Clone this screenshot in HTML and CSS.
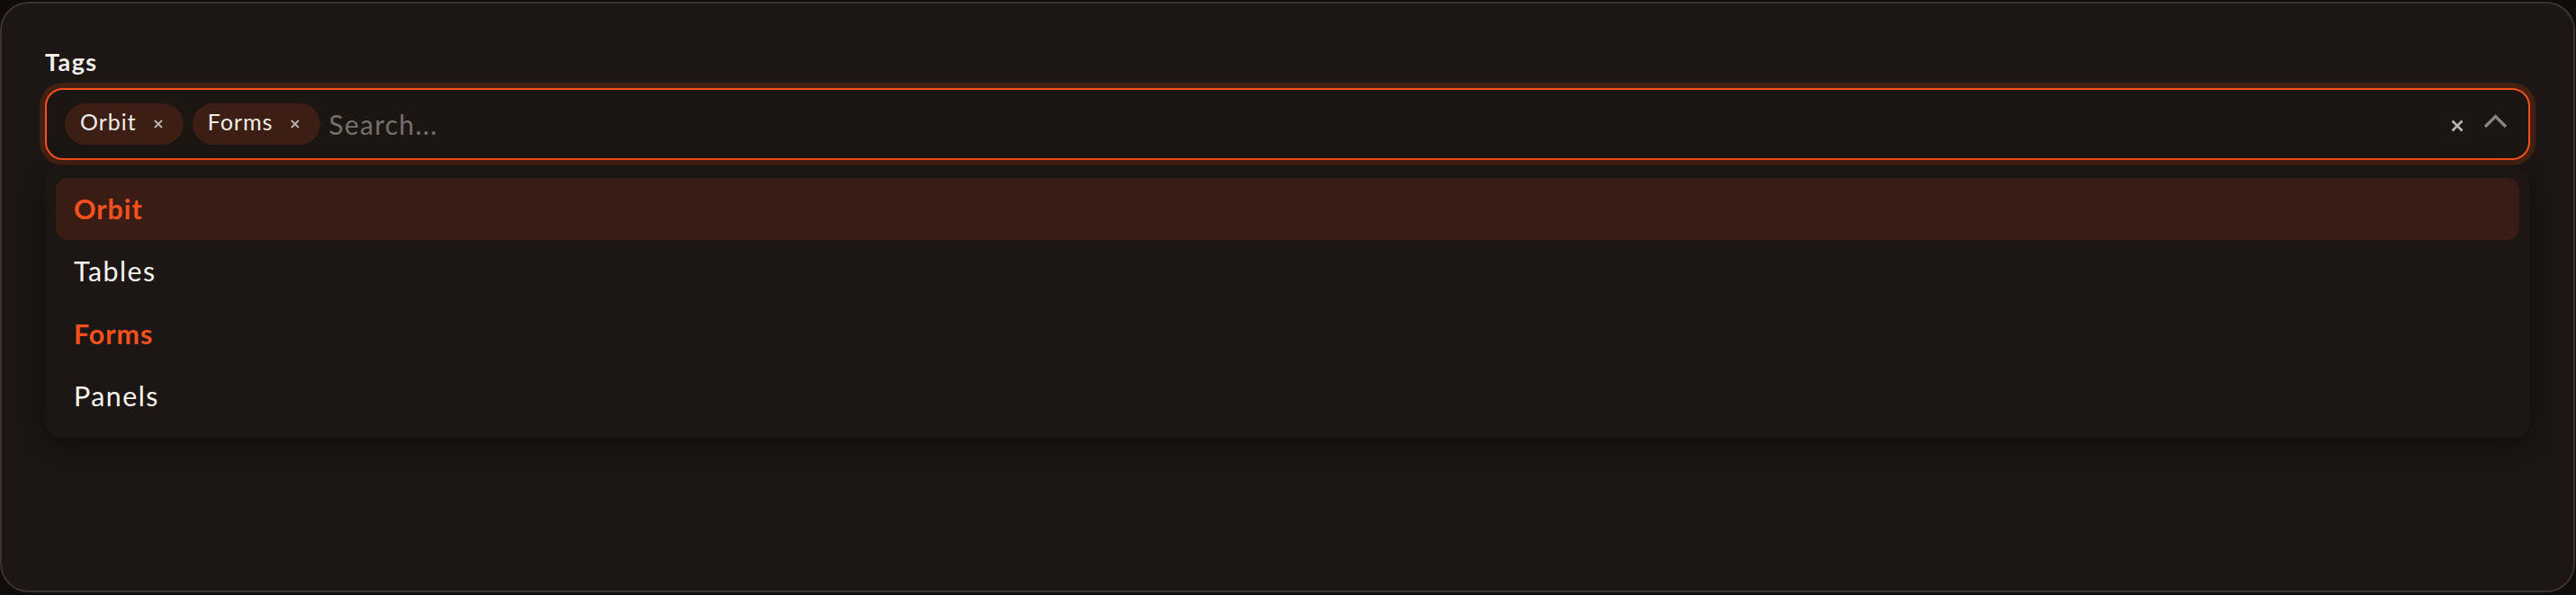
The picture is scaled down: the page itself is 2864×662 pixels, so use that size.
FILE: index.html
```html
<!DOCTYPE html>
<html lang="en">
<head>
<meta charset="utf-8">
<title>Tags</title>
<link rel="stylesheet" href="styles.css">
</head>
<body>
<div class="card">
  <div class="label">Tags</div>
  <div class="field">
    <div class="chips">
      <span class="chip"><span class="chip-text">Orbit</span><svg class="chip-x" viewBox="0 0 10 10"><path d="M1 1L9 9M9 1L1 9"/></svg></span>
      <span class="chip"><span class="chip-text">Forms</span><svg class="chip-x" viewBox="0 0 10 10"><path d="M1 1L9 9M9 1L1 9"/></svg></span>
    </div>
    <input class="search" type="text" placeholder="Search...">
    <svg class="clear" viewBox="0 0 14 14"><path d="M1.5 1.5L12.5 12.5M12.5 1.5L1.5 12.5"/></svg>
    <svg class="chevron" viewBox="0 0 27 17"><path d="M2 15L13.5 3.5L25 15"/></svg>
  </div>
  <div class="menu">
    <div class="opt opt-active opt-selected">Orbit</div>
    <div class="opt">Tables</div>
    <div class="opt opt-selected">Forms</div>
    <div class="opt">Panels</div>
  </div>
</div>
</body>
</html>
```

FILE: styles.css
```css
html, body {
  margin: 0;
  padding: 0;
  background: #100c0a;
  height: 100%;
}
body {
  font-family: "Lato", "Liberation Sans", sans-serif;
  overflow: hidden;
}
.card {
  box-sizing: border-box;
  margin-top: 2px;
  width: 2863px;
  height: 657px;
  border: 2px solid #3a322d;
  border-radius: 32px;
  background: #1c1714;
  padding: 47px 48px 0 48px;
}
.label {
  font-size: 27px;
  line-height: 36px;
  font-weight: 700;
  letter-spacing: 1.4px;
  color: #f4efea;
  margin-bottom: 11px;
}
.field {
  box-sizing: border-box;
  height: 80px;
  border: 2px solid #f4511e;
  border-radius: 20px;
  box-shadow: 0 0 0 6px #43200f;
  background: #1b1612;
  display: flex;
  align-items: center;
  padding: 0 23px 0 20px;
}
.chips {
  display: flex;
  gap: 10px;
}
.chip {
  box-sizing: border-box;
  height: 46px;
  border-radius: 23px;
  background: #3c1e15;
  display: flex;
  align-items: center;
  padding: 0 23px 5px 17px;
  color: #f0ebe6;
  font-size: 25px;
  letter-spacing: 1px;
}
.chip-text {
  line-height: 1;
}
.chip-x {
  width: 10px;
  height: 10px;
  margin-left: 19px;
  margin-top: 5px;
  fill: none;
  stroke: #b8b0aa;
  stroke-width: 2;
}
.search {
  flex: 1;
  min-width: 0;
  margin-left: 10px;
  border: none;
  outline: none;
  background: transparent;
  padding: 0;
  font-family: inherit;
  font-size: 30px;
  letter-spacing: 1.3px;
  line-height: 36px;
  height: 36px;
  color: #f4efea;
}
.search::placeholder {
  color: #76706b;
}
.clear {
  width: 14px;
  height: 14px;
  margin-top: 4px;
  fill: none;
  stroke: #bdb7b2;
  stroke-width: 2.6;
}
.chevron {
  width: 27px;
  height: 17px;
  margin-left: 22px;
  margin-bottom: 7px;
  fill: none;
  stroke: #8a847f;
  stroke-width: 3.2;
}
.menu {
  margin-top: 8px;
  padding: 12px;
  border-radius: 18px;
  background: #1c1714;
  box-shadow: 0 8px 28px rgba(0, 0, 0, 0.45);
}
.opt {
  height: 69.3px;
  line-height: 69.3px;
  padding-left: 20px;
  border-radius: 14px;
  font-size: 30.5px;
  letter-spacing: 1.4px;
  color: #f7f3ef;
}
.opt-active {
  background: #391d15;
}
.opt-selected {
  color: #f4511e;
  font-weight: 700;
  letter-spacing: 0.9px;
}
```
